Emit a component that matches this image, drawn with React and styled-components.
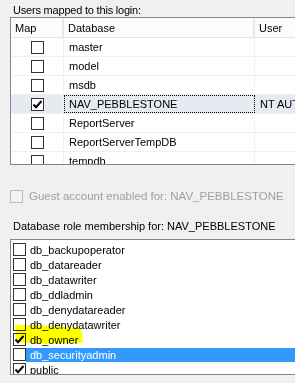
import React from "react";
import styled, { createGlobalStyle } from "styled-components";

const GlobalStyle = createGlobalStyle`
  html, body {
    margin: 0;
    background: #f0f0f0;
  }
  body {
    font-family: "Liberation Sans", Arial, sans-serif;
    font-size: 11px;
    color: #000;
  }
`;

const databases = [
  { name: "master" },
  { name: "model" },
  { name: "msdb" },
  { name: "NAV_PEBBLESTONE", user: "NT AUTHORITY\\SYSTEM", mapped: true, selected: true },
  { name: "ReportServer" },
  { name: "ReportServerTempDB" },
  { name: "tempdb" },
];

const roles = [
  { name: "db_backupoperator" },
  { name: "db_datareader" },
  { name: "db_datawriter" },
  { name: "db_ddladmin" },
  { name: "db_denydatareader" },
  { name: "db_denydatawriter" },
  { name: "db_owner", checked: true },
  { name: "db_securityadmin", selected: true },
  { name: "public", checked: true },
];

const StyledPage = styled.div`
  width: 295px;
  height: 383px;
  overflow: hidden;
  padding-left: 10px;
  box-sizing: border-box;
  display: flex;
  flex-direction: column;
`;

const StyledLabel = styled.div`
  margin: ${(p) => p.$top}px 0 0 3px;
  height: 13px;
  line-height: 13px;
  white-space: nowrap;
  letter-spacing: ${(p) => (p.$tight ? "-0.2px" : "0")};
`;

const StyledGuestText = styled.span`
  font-size: 11.5px;
  line-height: 13px;
  white-space: nowrap;
  color: #a0a0a0;
`;

const StyledGrid = styled.div`
  width: 340px;
  height: 148px;
  box-sizing: border-box;
  border: 1px solid #828790;
  border-right: none;
  background: #fff;
  overflow: hidden;
  flex-shrink: 0;
`;

const StyledRow = styled.div`
  display: grid;
  grid-template-columns: 53px 191px 1fr;
  height: ${(p) => (p.$header ? 20 : 19)}px;
  box-sizing: border-box;
  border-bottom: 1px solid ${(p) => (p.$header ? "#e5e5e5" : "#f0f0f0")};
  background: ${(p) => (p.$header ? "#fcfcfc" : p.$selected ? "#e6ebf1" : "#fff")};
`;

const StyledCell = styled.div`
  display: flex;
  align-items: center;
  justify-content: ${(p) => (p.$center ? "center" : "flex-start")};
  padding-left: ${(p) => (p.$center ? 0 : p.$header ? 4 : 5)}px;
  padding-top: ${(p) => (p.$center ? 1 : 0)}px;
  box-sizing: border-box;
  border-right: ${(p) => (p.$header ? "2px solid #e8e8e8" : "1px solid #f0f0f0")};
  white-space: nowrap;
  overflow: hidden;
  outline: ${(p) => (p.$focused ? "1px dotted #000" : "none")};
  outline-offset: -1px;
`;

const StyledBox = styled.span`
  display: inline-flex;
  align-items: center;
  justify-content: center;
  width: 13px;
  height: 13px;
  box-sizing: border-box;
  border: 1px solid ${(p) => (p.$disabled ? "#bcbcbc" : "#333")};
  background: ${(p) => (p.$disabled ? "#f3f3f3" : "#fff")};
  flex-shrink: 0;
`;

const StyledCheckRow = styled.div`
  display: flex;
  align-items: center;
  gap: 6px;
  margin-top: 25px;
  height: 13px;
`;

const StyledListBox = styled.div`
  position: relative;
  width: 340px;
  height: 136px;
  margin-top: 6px;
  box-sizing: border-box;
  border: 1px solid #828790;
  border-right: none;
  padding: 2px 0 0 2px;
  background: #fff;
  overflow: hidden;
  flex-shrink: 0;
`;

const StyledListItem = styled.div`
  display: flex;
  align-items: center;
  height: 15px;
  flex-shrink: 0;
`;

const StyledItemText = styled.span`
  flex: 1;
  height: 14px;
  line-height: 14px;
  padding-left: 4px;
  white-space: nowrap;
  background: ${(p) => (p.$selected ? "#3399ff" : "transparent")};
  color: ${(p) => (p.$selected ? "#fff" : "#000")};
`;

const StyledHighlight = styled.svg`
  position: absolute;
  left: 4px;
  top: 84px;
  mix-blend-mode: multiply;
  pointer-events: none;
`;

function CheckBox({ checked, disabled }) {
  return (
    <StyledBox $disabled={disabled}>
      {checked && (
        <svg width="11" height="11" viewBox="0 0 11 11">
          <path d="M1.5 5.5 L4 8.2 L9.5 2" fill="none" stroke="#000" strokeWidth="2" />
        </svg>
      )}
    </StyledBox>
  );
}

function App() {
  return (
    <>
      <GlobalStyle />
      <StyledPage>
        <StyledLabel $top={4} $tight>
          Users mapped to this login:
        </StyledLabel>
        <StyledGrid>
          <StyledRow $header>
            <StyledCell $header>Map</StyledCell>
            <StyledCell $header>Database</StyledCell>
            <StyledCell $header>User</StyledCell>
          </StyledRow>
          {databases.map((db) => (
            <StyledRow key={db.name} $selected={db.selected}>
              <StyledCell $center>
                <CheckBox checked={db.mapped} />
              </StyledCell>
              <StyledCell $focused={db.selected}>{db.name}</StyledCell>
              <StyledCell>{db.user}</StyledCell>
            </StyledRow>
          ))}
        </StyledGrid>

        <StyledCheckRow>
          <CheckBox disabled />
          <StyledGuestText>Guest account enabled for: NAV_PEBBLESTONE</StyledGuestText>
        </StyledCheckRow>

        <StyledLabel $top={17}>Database role membership for: NAV_PEBBLESTONE</StyledLabel>
        <StyledListBox>
          {roles.map((role) => (
            <StyledListItem key={role.name}>
              <CheckBox checked={role.checked} />
              <StyledItemText $selected={role.selected}>{role.name}</StyledItemText>
            </StyledListItem>
          ))}
          <StyledHighlight width="70" height="21" viewBox="0 0 70 21">
            <path d="M0 1 L30 1.5 L66 4 L68 19 L30 20 L1 18 Z" fill="#ffff00" />
          </StyledHighlight>
        </StyledListBox>
      </StyledPage>
    </>
  );
}

export default App;
